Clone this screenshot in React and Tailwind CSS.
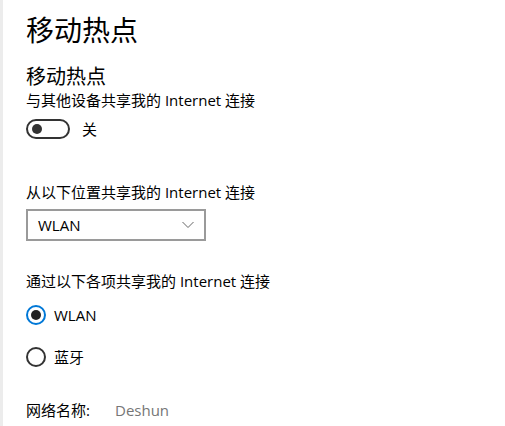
export default function App() {
  return (
    <div
      className="flex w-[505px] h-[426px] bg-white overflow-hidden text-black"
      style={{ fontFamily: '"Open Sans", "Noto Sans CJK SC", sans-serif' }}
    >
      {/* left strip */}
      <div className="w-[3px] shrink-0 bg-[#ececec]" />

      <div className="flex flex-col pl-[23px] pt-[10px]">
        <h1 className="text-[28px] leading-[40px] font-normal">移动热点</h1>

        <h2 className="mt-[14px] text-[20px] leading-[26px]">移动热点</h2>
        <p className="text-[15px] leading-[20px]">与其他设备共享我的 Internet 连接</p>

        <div className="mt-[9px] flex items-center gap-3">
          <div className="w-[44px] h-[20px] rounded-full border-2 border-[#333] flex items-center px-[4px]">
            <div className="w-[10px] h-[10px] rounded-full bg-[#333]" />
          </div>
          <span className="text-[15px] leading-[20px]">关</span>
        </div>

        <p className="mt-[43px] text-[15px] leading-[20px]">从以下位置共享我的 Internet 连接</p>
        <div className="mt-[7px] w-[180px] h-[32px] border-2 border-[#9a9a9a] flex items-center justify-between pl-[10px] pr-[10px]">
          <span className="text-[15px]">WLAN</span>
          <svg width="12" height="8" viewBox="0 0 12 8" fill="none">
            <path d="M0.5 1 L6 6.5 L11.5 1" stroke="#666" strokeWidth="1" />
          </svg>
        </div>

        <p className="mt-[30px] text-[15px] leading-[20px]">通过以下各项共享我的 Internet 连接</p>

        <div className="mt-[14px] flex items-center gap-2">
          <div className="w-[20px] h-[20px] rounded-full border-2 border-[#0078d7] flex items-center justify-center">
            <div className="w-[10px] h-[10px] rounded-full bg-[#222]" />
          </div>
          <span className="text-[15px] leading-[20px]">WLAN</span>
        </div>

        <div className="mt-[22px] flex items-center gap-2">
          <div className="w-[20px] h-[20px] rounded-full border-2 border-[#333]" />
          <span className="text-[15px] leading-[20px]">蓝牙</span>
        </div>

        <div className="mt-[33px] flex text-[15px] leading-[20px]">
          <span className="w-[89px]">网络名称:</span>
          <span className="text-[#767676]">Deshun</span>
        </div>
      </div>
    </div>
  );
}
